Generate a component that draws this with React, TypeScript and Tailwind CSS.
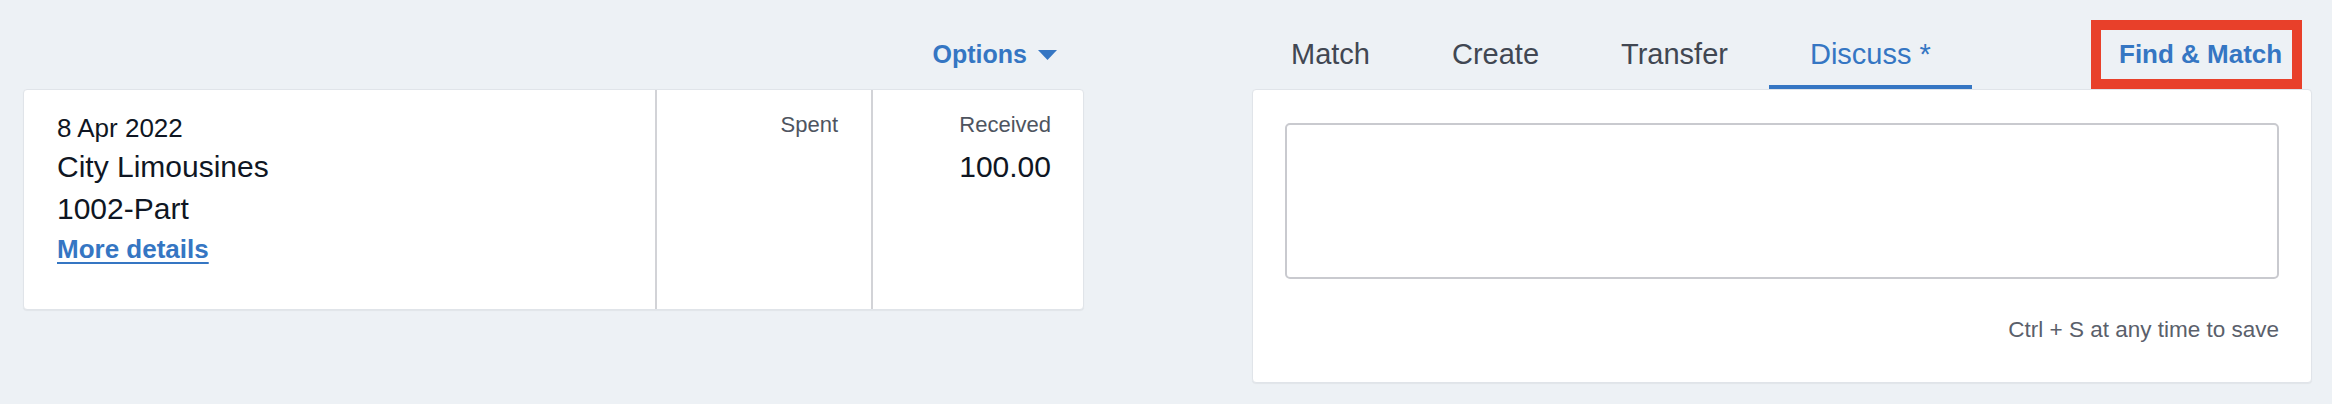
const tabs = [
  { label: "Match", active: false },
  { label: "Create", active: false },
  { label: "Transfer", active: false },
  { label: "Discuss *", active: true },
];

export default function App() {
  return (
    <div className="min-h-[404px] bg-[#edf1f5] font-['Liberation_Sans',Arial,sans-serif] flex gap-[168px] pl-[23px] pr-[20px]">
      {/* Statement line */}
      <div className="w-[1061px] flex flex-col">
        <div className="h-[89px] flex justify-end items-start pt-[39px] pr-[27px]">
          <button className="flex items-center gap-[11px] text-[25px] leading-[30px] font-bold text-[#3576c3]">
            Options
            <svg width="19" height="10" viewBox="0 0 19 10" className="mt-[1px]">
              <path d="M0 0 H19 L9.5 10 Z" fill="#3576c3" />
            </svg>
          </button>
        </div>
        <div className="h-[221px] bg-white border border-[#e0e4e9] rounded-[4px] shadow-[0_1px_1px_rgba(0,0,0,0.05)] flex">
          <div className="w-[631px] pl-[33px] pt-[20px] text-[#0f1623]">
            <p className="text-[26px] leading-[36px]">8 Apr 2022</p>
            <p className="text-[30px] leading-[42px]">City Limousines</p>
            <p className="text-[30px] leading-[42px]">1002-Part</p>
            <a className="block mt-[1px] text-[26px] leading-[36px] font-bold text-[#3576c3] underline decoration-2 underline-offset-[4px]">
              More details
            </a>
          </div>
          <div className="w-[216px] border-l-2 border-[#d2d3d7] pt-[20px] pr-[33px] text-right">
            <p className="text-[22px] leading-[30px] text-[#4e5460]">Spent</p>
          </div>
          <div className="flex-1 border-l-2 border-[#d2d3d7] pt-[20px] pr-[32px] text-right">
            <p className="text-[22px] leading-[30px] text-[#4e5460]">Received</p>
            <p className="mt-[6px] text-[30px] leading-[42px] text-[#0f1623]">100.00</p>
          </div>
        </div>
      </div>

      {/* Discuss panel */}
      <div className="w-[1060px] flex flex-col">
        <div className="h-[89px] flex justify-between items-end">
          <div className="flex -ml-[2px]">
            {tabs.map((tab) => (
              <div
                key={tab.label}
                className={`px-[41px] pb-[11px] text-[29px] leading-[40px] border-b-4 ${
                  tab.active ? "border-[#3576c3] text-[#3576c3]" : "border-transparent text-[#414752]"
                }`}
              >
                {tab.label}
              </div>
            ))}
          </div>
          <div className="mr-[10px] border-[10px] border-[#e8402a]">
            <div className="w-[191px] h-[49px] pl-[18px] text-[26px] leading-[49px] font-bold text-[#3576c3]">
              Find &amp; Match
            </div>
          </div>
        </div>
        <div className="h-[294px] bg-white border border-[#e0e4e9] rounded-[4px] shadow-[0_1px_1px_rgba(0,0,0,0.05)] px-[32px] pt-[33px]">
          <div className="h-[156px] border-2 border-[#c9cacf] rounded-[5px]" />
          <p className="mt-[36px] text-right text-[22.5px] leading-[30px] text-[#5a606b]">
            Ctrl + S at any time to save
          </p>
        </div>
      </div>
    </div>
  );
}
